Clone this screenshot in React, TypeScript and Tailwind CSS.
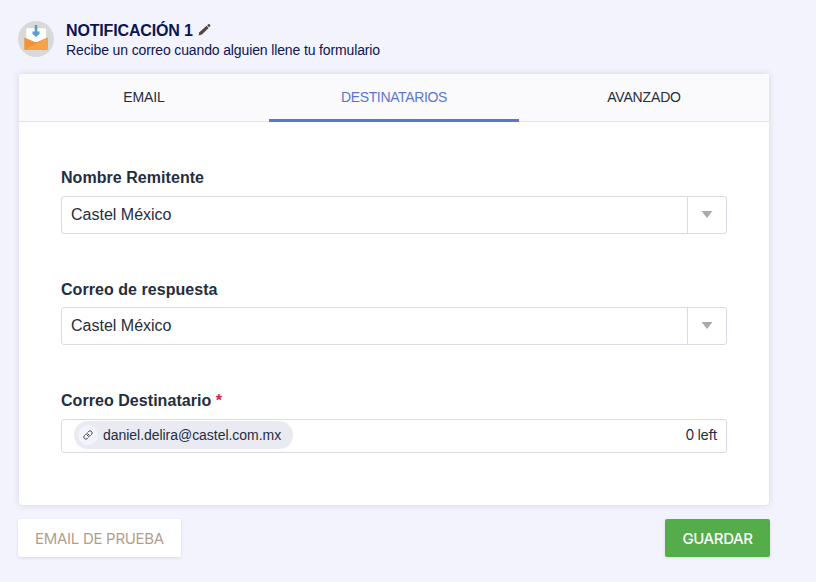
import React, { useState } from "react";
import clsx from "clsx";

const tabs = ["EMAIL", "DESTINATARIOS", "AVANZADO"];

const EnvelopeIcon = () => (
  <svg viewBox="0 0 36 36" className="h-9 w-9 shrink-0">
    <circle cx="18" cy="18" r="18" fill="#d9dad8" />
    <path d="M8.300 7.300h19.700v14H8.300z" fill="#fcfdfd" />
    <path d="M6.300 16.500 18 21.500 29.700 16.500v12.200H6.300z" fill="#f19338" />
    <path d="M6.300 28.700 18 20.700 29.700 28.700z" fill="#f0913a" />
    <path d="M6.300 28.700 29.700 16.500v12.200z" fill="#f5a24a" />
    <path d="M16.700 4h2.600v6.500h2.200v2.500L18 16l-3.500-3v-2.500h2.200z" fill="#5b9fc9" />
  </svg>
);

const PencilIcon = () => (
  <svg viewBox="0 0 14 14" className="relative -top-0.5 left-px h-[13px] w-[13px]" fill="#53483d">
    <path d="M.6 13.400 1.500 9.900 9.200 3 11.500 5.300 4.200 12.400z" />
    <path d="m9.800 2.500 1.300-1.200c.4-.4.900-.4 1.300 0l.8.800c.4.400.4.900 0 1.300l-1.200 1.300z" />
  </svg>
);

const LinkIcon = () => (
  <svg
    viewBox="0 0 24 24"
    className="h-2.5 w-2.5"
    fill="none"
    stroke="#3a4055"
    strokeWidth="2.3"
    strokeLinecap="round"
    strokeLinejoin="round"
  >
    <path d="M10 13a5 5 0 0 0 7.540.540l3-3a5 5 0 0 0-7.070-7.070l-1.720 1.710" />
    <path d="M14 11a5 5 0 0 0-7.540-.540l-3 3a5 5 0 0 0 7.070 7.070l1.710-1.710" />
  </svg>
);

const SelectField = ({ label, value }: { label: string; value: string }) => (
  <div>
    <div className="h-6 text-base leading-6 font-bold tracking-[0.05px]">{label}</div>
    <div className="mt-1.5 flex h-[38px] rounded-[3px] border border-[#d8dae5]">
      <div className="flex flex-1 items-center pl-[9px] text-base">{value}</div>
      <div className="flex w-[39px] items-center justify-center border-l border-[#d8dae5]">
        <svg viewBox="0 0 12 8" className="h-2 w-3" fill="#aaaaac">
          <path d="M.5 0h11L6 7z" />
        </svg>
      </div>
    </div>
  </div>
);

const App = () => {
  const [activeTab, setActiveTab] = useState("DESTINATARIOS");

  return (
    <div className="h-[582px] overflow-hidden bg-[#f3f3fe] pt-[21px] pl-[18px] font-['Liberation_Sans',sans-serif] text-[#252d40]">
      <header className="flex h-[53px] items-start gap-3 text-[#0a1551]">
        <EnvelopeIcon />
        <div>
          <div className="flex h-5 items-center gap-1">
            <h1 className="text-base leading-5 font-bold tracking-[-0.15px]">NOTIFICACIÓN 1</h1>
            <PencilIcon />
          </div>
          <p className="-mt-px text-sm leading-5 tracking-[-0.13px]">
            Recibe un correo cuando alguien llene tu formulario
          </p>
        </div>
      </header>

      <main className="ml-px h-[431px] w-[750px] rounded-b-[4px] bg-white shadow-[0_0_6px_rgba(60,60,70,0.17)]">
        <nav className="flex h-12 border-b border-[#e3e4ea] bg-[#fafafc]">
          {tabs.map((tab) => (
            <button
              key={tab}
              onClick={() => setActiveTab(tab)}
              className={clsx(
                "-mb-px flex-1 border-b-[3px] pt-px text-sm",
                tab === "DESTINATARIOS" ? "tracking-[-0.35px]" : "tracking-[-0.15px]",
                activeTab === tab ? "border-[#5b76d0] text-[#5b76d0]" : "border-transparent"
              )}
            >
              {tab}
            </button>
          ))}
        </nav>

        <div className="px-[42px] pt-11">
          <SelectField label="Nombre Remitente" value="Castel México" />
          <div className="mt-11 -mb-px [&>div>div:last-child]:mt-[5px]">
            <SelectField label="Correo de respuesta" value="Castel México" />
          </div>

          {/* Recipients */}
          <div className="mt-[45px]">
            <div className="h-6 text-base leading-6 font-bold tracking-[0.05px]">
              Correo Destinatario <span className="text-[#d2234c]">*</span>
            </div>
            <div className="mt-1.5 flex h-[34px] items-center justify-between rounded-[3px] border border-[#d8dae5] pr-[9px] pl-3">
              <div className="relative -top-px flex h-7 items-center rounded-full bg-[#eaebf2] pr-3 pl-1">
                <span className="flex h-5 w-5 items-center justify-center rounded-full bg-[#f3f3fb]">
                  <LinkIcon />
                </span>
                <span className="ml-[5px] text-sm tracking-[-0.04px]">daniel.delira@castel.com.mx</span>
              </div>
              <span className="relative -top-px font-[Inter,sans-serif] text-sm tracking-[-0.35px]">0 left</span>
            </div>
          </div>
        </div>
      </main>

      <footer className="mt-3.5 flex h-[38px] w-[752px] justify-between font-[Inter,sans-serif] text-[15px] tracking-[-0.3px]">
        <button className="w-[163px] rounded-[2px] bg-white pt-0.5 text-[#b39e8a] shadow-[0_1px_3px_rgba(60,60,90,0.14)]">
          EMAIL DE PRUEBA
        </button>
        <button className="w-[105px] rounded-[2px] bg-[#54ac4b] pt-0.5 font-medium tracking-[-0.4px] text-white shadow-[0_1px_3px_rgba(60,60,90,0.14)]">
          GUARDAR
        </button>
      </footer>
    </div>
  );
};

export default App;
